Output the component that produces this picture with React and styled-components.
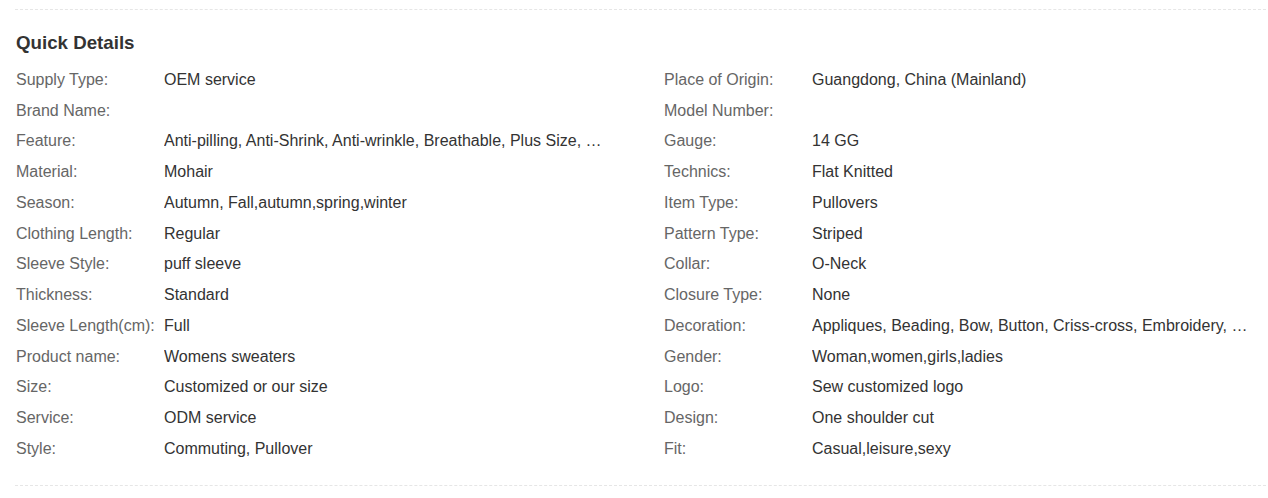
import React from "react";
import styled, { createGlobalStyle } from "styled-components";

const Global = createGlobalStyle`
  html, body { margin: 0; padding: 0; background: #fff; }
  body { font-family: "Liberation Sans", Arial, sans-serif; }
`;

const Section = styled.section`
  margin: 9px 2px 0 15px;
  padding: 21px 0 21px 1px;
  border-top: 1px dashed #e6e6e6;
  border-bottom: 1px dashed #e6e6e6;
`;

const Title = styled.h3`
  margin: 0 0 9.6px;
  font-size: 18.72px;
  line-height: 24px;
  font-weight: 700;
  color: #333;
`;

const Grid = styled.div`
  display: grid;
  grid-template-columns: 648px 1fr;
`;

const Row = styled.div`
  display: flex;
  align-items: center;
  height: 30.75px;
  font-size: 16px;
  line-height: 20px;
`;

const Label = styled.span`
  flex: 0 0 148px;
  color: #666;
  white-space: nowrap;
`;

const Value = styled.span`
  width: 444px;
  color: #333;
  white-space: nowrap;
  overflow: hidden;
  text-overflow: ellipsis;
`;

const left = [
  ["Supply Type:", "OEM service"],
  ["Brand Name:", ""],
  ["Feature:", "Anti-pilling, Anti-Shrink, Anti-wrinkle, Breathable, Plus Size, Quick Dry, Sustainable"],
  ["Material:", "Mohair"],
  ["Season:", "Autumn, Fall,autumn,spring,winter"],
  ["Clothing Length:", "Regular"],
  ["Sleeve Style:", "puff sleeve"],
  ["Thickness:", "Standard"],
  ["Sleeve Length(cm):", "Full"],
  ["Product name:", "Womens sweaters"],
  ["Size:", "Customized or our size"],
  ["Service:", "ODM service"],
  ["Style:", "Commuting, Pullover"],
];

const right = [
  ["Place of Origin:", "Guangdong, China (Mainland)"],
  ["Model Number:", ""],
  ["Gauge:", "14 GG"],
  ["Technics:", "Flat Knitted"],
  ["Item Type:", "Pullovers"],
  ["Pattern Type:", "Striped"],
  ["Collar:", "O-Neck"],
  ["Closure Type:", "None"],
  ["Decoration:", "Appliques, Beading, Bow, Button, Criss-cross, Embroidery, Lace, Pockets"],
  ["Gender:", "Woman,women,girls,ladies"],
  ["Logo:", "Sew customized logo"],
  ["Design:", "One shoulder cut"],
  ["Fit:", "Casual,leisure,sexy"],
];

export default function App() {
  const cells = [];
  left.forEach((l, i) => {
    const r = right[i];
    cells.push(
      <Row key={"l" + i}>
        <Label>{l[0]}</Label>
        <Value>{l[1]}</Value>
      </Row>
    );
    cells.push(
      <Row key={"r" + i}>
        <Label>{r[0]}</Label>
        <Value>{r[1]}</Value>
      </Row>
    );
  });
  return (
    <>
      <Global />
      <Section>
        <Title>Quick Details</Title>
        <Grid>{cells}</Grid>
      </Section>
    </>
  );
}
